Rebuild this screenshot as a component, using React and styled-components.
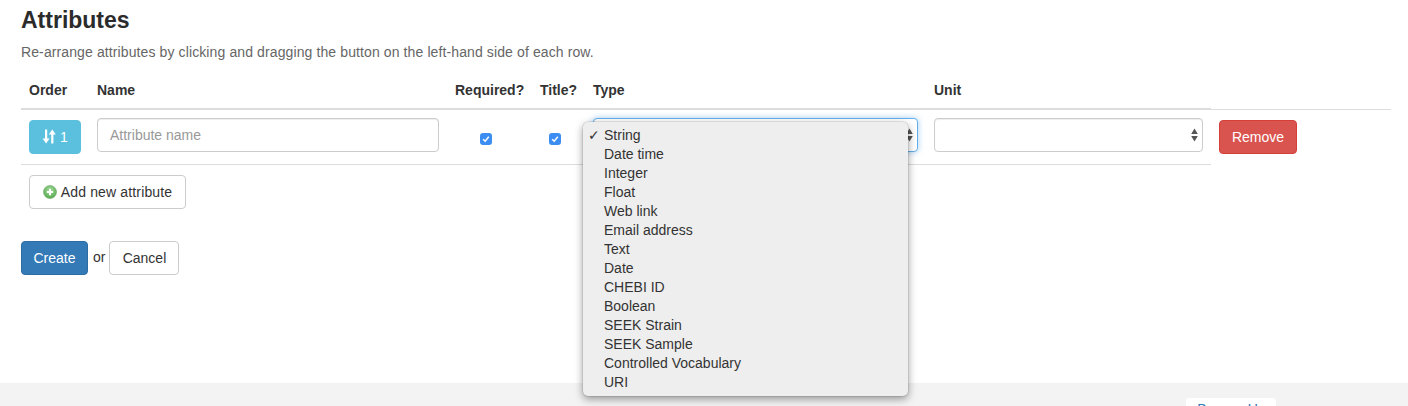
import styled, { createGlobalStyle } from "styled-components";

const GlobalStyle = createGlobalStyle`
    html, body {
        margin: 0;
        background: #fff;
    }
    body {
        font-family: "Liberation Sans", Arial, sans-serif;
        font-size: 14px;
        line-height: 20px;
        color: #333;
    }
`

const Page = styled.div`
    width: 1408px;
    height: 406px;
    position: relative;
    overflow: hidden;
    display: flex;
    flex-direction: column;
`

const Content = styled.div`
    height: 383px;
    padding: 7px 17px 0 21px;
    box-sizing: border-box;
`

const Title = styled.h2`
    margin: 0;
    font-size: 23px;
    line-height: 26px;
    font-weight: 700;
    color: #2b2b2b;
`

const Hint = styled.p`
    margin: 10px 0 0;
    font-size: 14px;
    line-height: 18px;
    letter-spacing: 0.11px;
    color: #666;
`

const Table = styled.table`
    width: 1370px;
    margin-top: 11px;
    border-collapse: collapse;
    table-layout: fixed;
`

const Head = styled.th`
    height: 37px;
    padding: 0 8px;
    box-sizing: border-box;
    width: ${(p) => p.$width}px;
    text-align: left;
    font-size: 14px;
    line-height: 18px;
    font-weight: 700;
    color: #333;
    border-bottom: 2px solid #ddd;
`

const SpareHead = styled.th`
    width: 180px;
    padding: 0;
`

const Row = styled.tr`
    height: 55px;
`

const Cell = styled.td`
    padding: 0 8px ${(p) => (p.$raised ? 4 : 0)}px;
    box-sizing: border-box;
    border-bottom: 1px solid #ddd;
    vertical-align: middle;
`

const CheckCell = styled.td`
    padding: 4px 16px 0 8px;
    box-sizing: border-box;
    border-bottom: 1px solid #ddd;
    text-align: center;
    vertical-align: middle;
`

const RemoveCell = styled.td`
    padding: 0 8px;
    border-top: 1px solid #ddd;
    vertical-align: middle;
`

const AddCell = styled.td`
    padding: 10px 8px 0;
`

const Button = styled.button`
    display: inline-flex;
    align-items: center;
    justify-content: center;
    gap: ${(p) => p.$gap || 0}px;
    width: ${(p) => p.$width}px;
    height: 34px;
    padding: 0;
    box-sizing: border-box;
    border: 1px solid ${(p) => p.$border};
    border-radius: 4px;
    background: ${(p) => p.$bg};
    color: ${(p) => p.$color};
    font-family: inherit;
    font-size: 14px;
    line-height: 20px;
    letter-spacing: ${(p) => p.$spacing || 0}px;
`

const Input = styled.input`
    display: block;
    width: 100%;
    height: 34px;
    padding: 0 12px;
    box-sizing: border-box;
    border: 1px solid #ccc;
    border-radius: 4px;
    font-family: inherit;
    font-size: 14px;
    color: #555;
    box-shadow: inset 0 1px 1px rgba(0, 0, 0, 0.075);

    &::placeholder {
        color: #999;
        opacity: 1;
    }
`

const SelectBox = styled.div`
    height: 34px;
    position: relative;
    box-sizing: border-box;
    border: 1px solid ${(p) => (p.$focused ? "#66afe9" : "#ccc")};
    border-radius: 4px;
    background: #fff;
    box-shadow: ${(p) => (p.$focused ? "0 0 6px rgba(102, 175, 233, 0.6)" : "inset 0 1px 1px rgba(0, 0, 0, 0.075)")};
`

const Arrows = styled.svg`
    position: absolute;
    right: 4px;
    top: 9px;
`

const Check = styled.span`
    display: inline-flex;
    align-items: center;
    justify-content: center;
    width: 12px;
    height: 12px;
    border-radius: 3px;
    background: #3b8df1;
`

const Actions = styled.div`
    display: flex;
    align-items: center;
    margin-top: 32px;
`

const Or = styled.span`
    margin: -1px 4px 0 5px;
    font-size: 14px;
    color: #333;
`

const Footer = styled.div`
    height: 23px;
    background: #f3f3f3;
    display: flex;
    justify-content: flex-end;
    align-items: flex-start;
    padding: 15px 132px 0 0;
    box-sizing: border-box;
    overflow: hidden;
`

const FooterTab = styled.a`
    display: block;
    width: 90px;
    height: 30px;
    padding-top: 1px;
    box-sizing: border-box;
    border-radius: 3px;
    background: #fff;
    text-align: center;
    font-size: 14px;
    line-height: 20px;
    color: #337ab7;
`

const Menu = styled.ul`
    position: absolute;
    left: 583px;
    top: 122px;
    width: 325px;
    height: 274px;
    margin: 0;
    padding: 4px 0 0;
    box-sizing: border-box;
    list-style: none;
    background: #eee;
    border-radius: 5px;
    box-shadow: 0 0 0 0.5px rgba(0, 0, 0, 0.15), 0 3px 9px rgba(0, 0, 0, 0.4);
`

const MenuItem = styled.li`
    position: relative;
    height: 19px;
    padding-left: 21px;
    font-size: 14px;
    line-height: 19px;
    color: #333;
`

const Tick = styled.span`
    position: absolute;
    left: 5px;
    top: 0;
    font-family: "DejaVu Sans", sans-serif;
    font-size: 14px;
    font-weight: 700;
`

const types = [
    "String",
    "Date time",
    "Integer",
    "Float",
    "Web link",
    "Email address",
    "Text",
    "Date",
    "CHEBI ID",
    "Boolean",
    "SEEK Strain",
    "SEEK Sample",
    "Controlled Vocabulary",
    "URI",
]

const SelectArrows = () => (
    <Arrows width="7" height="14" viewBox="0 0 7 14">
        <path d="M3.5 0.5 L6.8 6 H0.2 Z M3.5 13.5 L0.2 8 H6.8 Z" fill="#555" />
    </Arrows>
)

const CheckBox = () => (
    <Check>
        <svg width="10" height="10" viewBox="0 0 10 10">
            <path d="M2.2 5.2 L4.2 7.2 L7.8 2.8" fill="none" stroke="#fff" strokeWidth="1.5" />
        </svg>
    </Check>
)

const SortIcon = () => (
    <svg width="14" height="15" viewBox="0 0 14 15">
        <path d="M3 0.5 H5.2 V9.5 H7.6 L4.1 14.5 L0.6 9.5 H3 Z" fill="#fff" />
        <path d="M9.2 14.5 H11.4 V5.5 H13.8 L10.3 0.5 L6.8 5.5 H9.2 Z" fill="#fff" />
    </svg>
)

const AddIcon = () => (
    <svg width="14" height="14" viewBox="0 0 14 14">
        <defs>
            <radialGradient id="addFill" cx="50%" cy="35%" r="70%">
                <stop offset="0%" stopColor="#a5dc9b" />
                <stop offset="100%" stopColor="#4fa648" />
            </radialGradient>
        </defs>
        <circle cx="7" cy="7" r="6.5" fill="url(#addFill)" stroke="#6aa764" strokeWidth="0.6" />
        <path d="M7 3.8 V10.2 M3.8 7 H10.2" stroke="#fff" strokeWidth="2" />
    </svg>
)

const App = () => {
    return (
        <Page>
            <GlobalStyle />
            <Content>
                <Title>Attributes</Title>
                <Hint>Re-arrange attributes by clicking and dragging the button on the left-hand side of each row.</Hint>
                <Table>
                    <thead>
                        <tr>
                            <Head $width={68}>Order</Head>
                            <Head $width={358}>Name</Head>
                            <Head $width={85}>Required?</Head>
                            <Head $width={53}>Title?</Head>
                            <Head $width={341}>Type</Head>
                            <Head $width={285}>Unit</Head>
                            <SpareHead />
                        </tr>
                    </thead>
                    <tbody>
                        <Row>
                            <Cell>
                                <Button $width={52} $gap={4} $bg="#5bc0de" $border="#5bc0de" $color="#fff">
                                    <SortIcon />1
                                </Button>
                            </Cell>
                            <Cell $raised>
                                <Input placeholder="Attribute name" />
                            </Cell>
                            <CheckCell>
                                <CheckBox />
                            </CheckCell>
                            <CheckCell>
                                <CheckBox />
                            </CheckCell>
                            <Cell $raised>
                                <SelectBox $focused>
                                    <SelectArrows />
                                </SelectBox>
                            </Cell>
                            <Cell $raised>
                                <SelectBox>
                                    <SelectArrows />
                                </SelectBox>
                            </Cell>
                            <RemoveCell>
                                <Button $width={78} $bg="#d9534f" $border="#d43f3a" $color="#fff">Remove</Button>
                            </RemoveCell>
                        </Row>
                        <tr>
                            <AddCell colSpan={6}>
                                <Button $width={157} $gap={4} $spacing={0.15} $bg="#fff" $border="#ccc" $color="#333">
                                    <AddIcon />Add new attribute
                                </Button>
                            </AddCell>
                        </tr>
                    </tbody>
                </Table>
                <Actions>
                    <Button $width={67} $bg="#337ab7" $border="#2e6da4" $color="#fff">Create</Button>
                    <Or>or</Or>
                    <Button $width={70} $bg="#fff" $border="#ccc" $color="#333">Cancel</Button>
                </Actions>
            </Content>
            <Footer>
                <FooterTab>Browse Us</FooterTab>
            </Footer>
            <Menu>
                {types.map((type, i) => (
                    <MenuItem key={type}>
                        {i === 0 && <Tick>✓</Tick>}
                        {type}
                    </MenuItem>
                ))}
            </Menu>
        </Page>
    )
}

export default App
